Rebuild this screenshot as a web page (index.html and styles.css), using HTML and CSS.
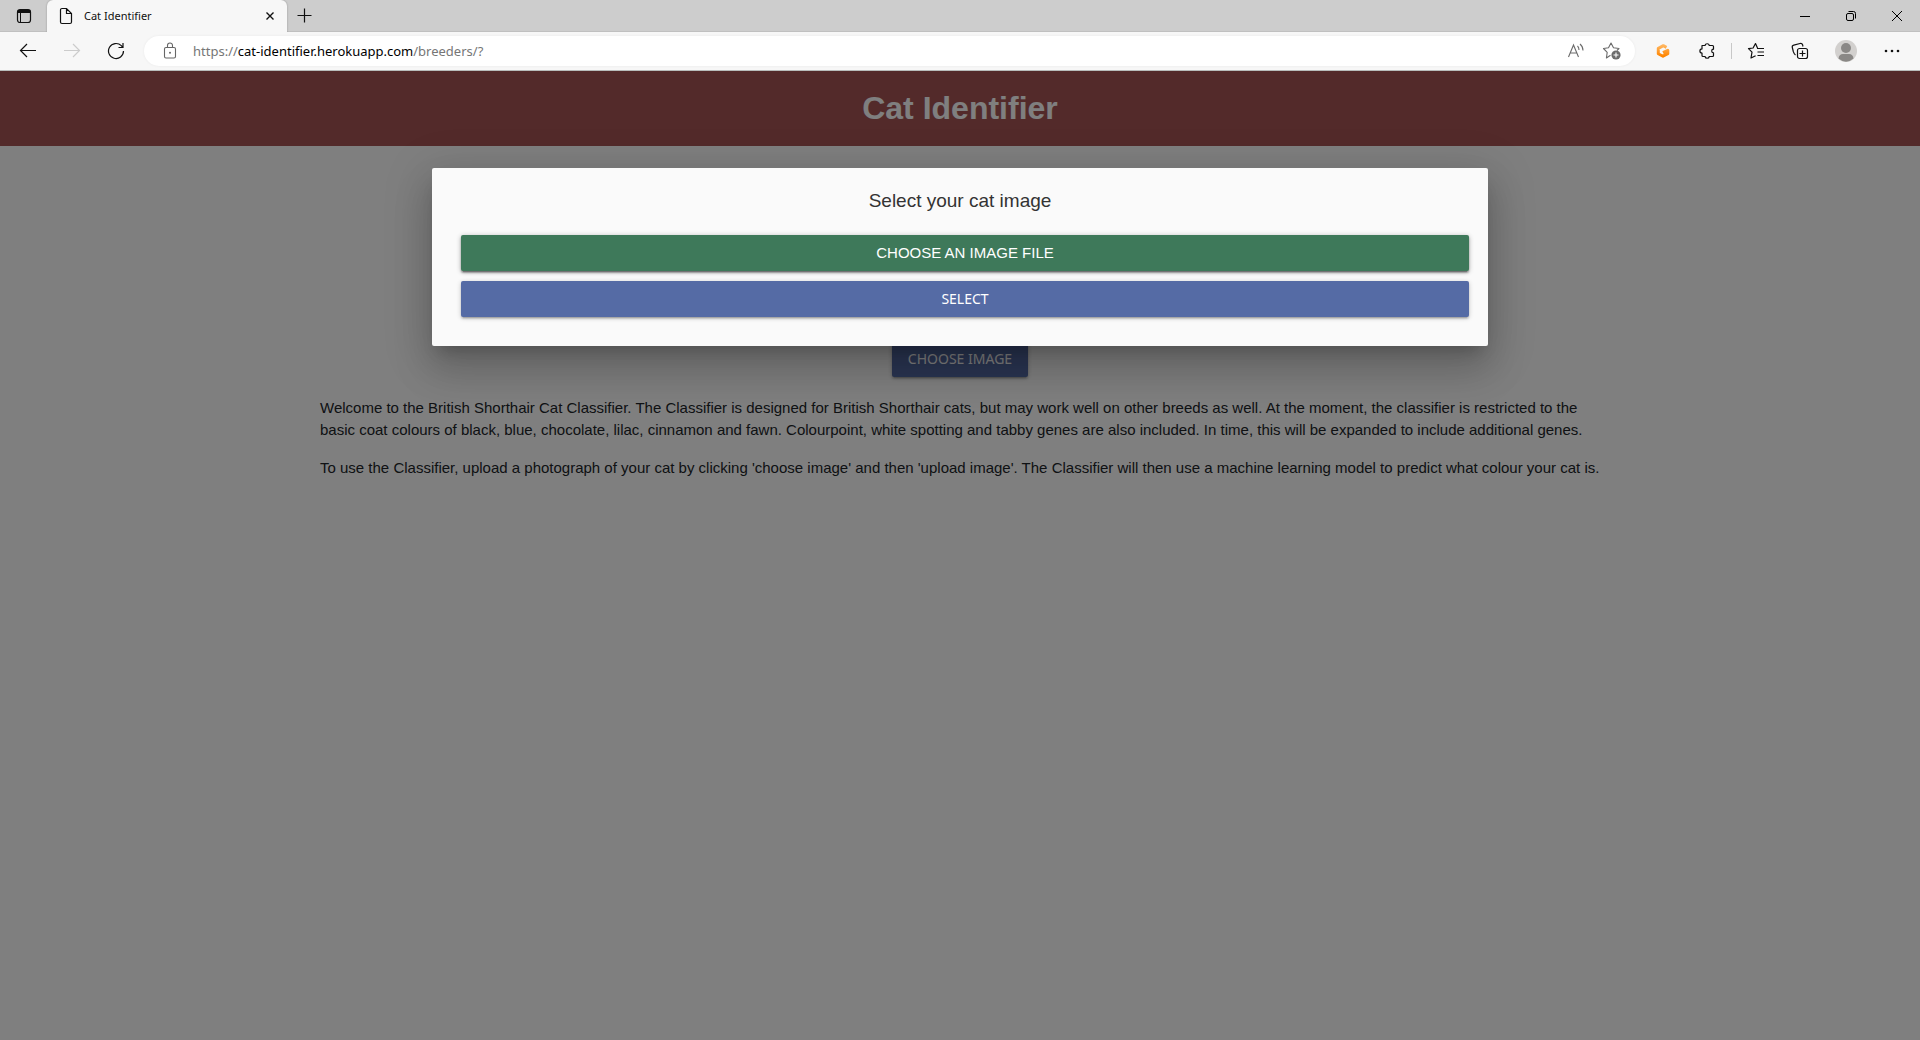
FILE: index.html
```html
<!DOCTYPE html>
<html lang="en">
<head>
<meta charset="utf-8">
<title>Cat Identifier</title>
<link rel="stylesheet" href="styles.css">
</head>
<body>
<div class="browser">
  <div class="tabstrip">
    <button class="tab-actions" aria-label="Tab actions">
      <svg width="16" height="16" viewBox="0 0 16 16" fill="none" stroke="#111"><rect x="1.5" y="1.5" width="13" height="13" rx="2.5" stroke-width="1.2"/><path d="M2 2.5h12v2H2z" fill="#111"/><path d="M4.5 5v9"/></svg>
    </button>
    <div class="tab">
      <svg width="14" height="18" viewBox="1 0 14 18" fill="none" stroke="#111" stroke-width="1.2"><path d="M8.5 1.5H4A1.5 1.5 0 0 0 2.500 3v12A1.500 1.500 0 0 0 4 16.500h8a1.500 1.500 0 0 0 1.500-1.500V6.500zM8.500 1.500v5h5"/></svg>
      <span class="tab-title">Cat Identifier</span>
      <button class="tab-close" aria-label="Close tab"><svg width="10" height="10" viewBox="0 0 10 10" stroke="#111" stroke-width="1.4"><path d="M1.500 1.500l7 7M8.500 1.500l-7 7"/></svg></button>
    </div>
    <button class="new-tab" aria-label="New tab"><svg width="16" height="16" viewBox="0 0 16 16" stroke="#111" stroke-width="1.2"><path d="M7.500 .500v14M.500 7.500h14"/></svg></button>
    <div class="window-controls">
      <button aria-label="Minimise"><svg width="12" height="12" viewBox="0 0 12 12" stroke="#000"><path d="M1 6.500h10"/></svg></button>
      <button aria-label="Restore"><svg width="12" height="12" viewBox="0 0 12 12" fill="none" stroke="#000"><rect x="1.500" y="3.500" width="7" height="7" rx="1.500"/><path d="M3.500 1.500H8.500A2 2 0 0 1 10.500 3.500V8.500"/></svg></button>
      <button aria-label="Close"><svg width="12" height="12" viewBox="0 0 12 12" stroke="#000"><path d="M1 1l10 10M11 1L1 11"/></svg></button>
    </div>
  </div>
  <div class="toolbar">
    <button class="tool" aria-label="Back"><svg width="18" height="18" viewBox="0 0 18 18" fill="none" stroke="#111" stroke-width="1.200"><path d="M17 8.500H1.500M8 2L1.500 8.500 8 15"/></svg></button>
    <button class="tool" aria-label="Forward" disabled><svg width="18" height="18" viewBox="0 0 18 18" fill="none" stroke="#ccc" stroke-width="1.200"><path d="M1 8.500h15.500M10 2l6.500 6.500L10 15"/></svg></button>
    <button class="tool" aria-label="Refresh"><svg width="18" height="18" viewBox="0 0 18 18" fill="none" stroke="#111" stroke-width="1.200"><path d="M16.500 9A7.500 7.500 0 1 1 14.300 3.700L15.500 5M16 1v4.500h-4.500"/></svg></button>
    <div class="address">
      <button class="site-info" aria-label="Site information"><svg width="16" height="18" viewBox="0 0 16 18" fill="none" stroke="#666" stroke-width="1.100"><rect x="2.500" y="5.500" width="11" height="10.500" rx="1.500"/><path d="M5.500 5.500V3.500a2.500 2.500 0 0 1 5 0v2"/><circle cx="8" cy="10.800" r="1" fill="#666" stroke="none"/></svg></button>
      <div class="url" role="textbox" aria-label="Address">https://<span class="host">cat-identifier.herokuapp.com</span>/breeders/?</div>
      <button class="address-tool" aria-label="Read aloud"><svg width="18" height="18" viewBox="0 0 18 18" fill="none" stroke="#6b6b6b" stroke-width="1.100"><path d="M1.500 15L6.500 3l5 12M3.200 11h6.600M10.500 4q1.500 1.500 1.500 4M13 2q3 2.500 3 6.500"/></svg></button>
      <button class="address-tool" aria-label="Add to favourites"><svg width="20" height="20" viewBox="0 0 20 20" fill="none" stroke="#6b6b6b" stroke-width="1.100" stroke-linejoin="round"><path d="M8.500 14.200L4.400 17l.8-5.600L1.500 7.500l5-.8L9 2l2.500 4.700 5.500.8-2 2"/><circle cx="14" cy="14" r="4.600" fill="#6b6b6b" stroke="none"/><path d="M14 11.500v5M11.500 14h5" stroke="#fff"/></svg></button>
    </div>
    <button class="tool" aria-label="Extension"><svg width="16" height="16" viewBox="0 0 16 16" fill="none"><defs><linearGradient id="orange" x2="0" y2="1"><stop stop-color="#ffb45c"/><stop offset="1" stop-color="#ff8500"/></linearGradient></defs><path d="M11.500 4.300L8.300 2.700 3.300 5.300V10.700L8 13.200l4.800-2.500V7.300L8 9.700" stroke="url(#orange)" stroke-width="3" stroke-linejoin="round"/></svg></button>
    <button class="tool" aria-label="Extensions"><svg width="18" height="18" viewBox="0 0 18 18" fill="none" stroke="#111" stroke-width="1.200" stroke-linejoin="round"><path d="M4 3.500h3a2.200 2.200 0 0 1 4.300 0h3.200a1 1 0 0 1 1 1v2.700a1.800 1.800 0 0 0 0 3.600v2.700a1 1 0 0 1-1 1h-3.200a2.200 2.200 0 0 1-4.300 0H5a1 1 0 0 1-1-1v-2.400a2.100 2.100 0 0 1 0-4.200z"/></svg></button>
    <span class="divider"></span>
    <button class="tool" aria-label="Favourites"><svg width="18" height="18" viewBox="0 0 18 18" fill="none" stroke="#111" stroke-width="1.200" stroke-linejoin="round"><path d="M10.500 6L8.500 1.500 6.100 6 1.500 6.700l3.500 3.500L4 16l4.600-2.300M10 6.500h7M10.500 10h6.500M10.500 13.500H17"/></svg></button>
    <button class="tool" aria-label="Collections"><svg width="18" height="18" viewBox="0 0 18 18" fill="none" stroke="#111" stroke-width="1.200"><rect x="6.500" y="6.500" width="10" height="10" rx="2"/><path d="M11.500 8.500v6M8.500 11.500h6M4.500 13C3 12 2.800 11 2.300 9.500L1.300 5.500C1 4.300 1.700 3.500 2.800 3.200L9 1.500c1.300-.3 2.200.2 2.600 1.300l.4 1.700"/></svg></button>
    <button class="tool profile" aria-label="Profile"><svg width="22" height="22" viewBox="0 0 22 22"><circle cx="11" cy="11" r="11" fill="#d2d0ce"/><circle cx="11" cy="8" r="5" fill="#8a8886"/><path d="M3.500 18.500Q4 14 8 14h6q4 0 4.500 4.500Q11 25 3.500 18.500z" fill="#8a8886"/></svg></button>
    <button class="tool menu" aria-label="Settings and more"><svg width="16" height="4" viewBox="0 0 16 4" fill="#111"><circle cx="2" cy="2" r="1.300"/><circle cx="8" cy="2" r="1.300"/><circle cx="14" cy="2" r="1.300"/></svg></button>
  </div>
  <div class="page">
    <header class="banner"><h1>Cat Identifier</h1></header>
    <main class="container">
      <button class="btn">Choose image</button>
      <div class="intro">
        <p>Welcome to the British Shorthair Cat Classifier. The Classifier is designed for British Shorthair cats, but may work well on other breeds as well. At the moment, the classifier is restricted to the basic coat colours of black, blue, chocolate, lilac, cinnamon and fawn. Colourpoint, white spotting and tabby genes are also included. In time, this will be expanded to include additional genes.</p>
        <p>To use the Classifier, upload a photograph of your cat by clicking 'choose image' and then 'upload image'. The Classifier will then use a machine learning model to predict what colour your cat is.</p>
      </div>
    </main>
    <div class="overlay"></div>
    <div class="modal" role="dialog" aria-labelledby="modal-title">
      <h2 id="modal-title">Select your cat image</h2>
      <div class="modal-actions">
        <button class="btn btn-file">Choose an image file</button>
        <button class="btn">Select</button>
      </div>
    </div>
  </div>
</div>
</body>
</html>
```
FILE: styles.css
```css
* { box-sizing: border-box; }

body {
  margin: 0;
  font-family: "Liberation Sans", Arial, sans-serif;
}

button {
  border: 0;
  padding: 0;
  background: none;
  font-family: inherit;
}

.browser {
  display: flex;
  flex-direction: column;
  min-height: 100vh;
}

.tabstrip {
  display: flex;
  height: 32px;
  background: #cdcdcd;
  box-shadow: inset 0 -1px #c0c0c0;
}

.tabstrip button,
.toolbar button {
  display: flex;
  align-items: center;
  justify-content: center;
}

.tab-actions { width: 47px; }

.tab {
  display: flex;
  align-items: center;
  width: 240px;
  padding: 0 8px 0 12px;
  border-radius: 6px 6px 0 0;
  background: #f7f7f7;
  box-shadow: 0 0 2px rgba(0, 0, 0, .3);
  clip-path: inset(0 -2px);
}

.tab-title {
  flex: 1;
  padding-left: 11px;
  font: 11px/16px "Noto Sans", sans-serif;
  color: #111;
}

.tab-close { width: 18px; height: 18px; }
.new-tab { width: 36px; }

.window-controls {
  display: flex;
  margin-left: auto;
}

.window-controls button { width: 46px; }

.toolbar {
  display: flex;
  align-items: center;
  height: 39px;
  padding: 0 6px;
  border-bottom: 1px solid #b9bdbb;
  background: #f7f7f7;
}

.tool { width: 44px; height: 32px; }

.address {
  display: flex;
  flex: 1;
  align-items: center;
  height: 30px;
  margin: 0 6px;
  padding: 0 5px 0 12px;
  border-radius: 15px;
  background: #fff;
  box-shadow: 0 0 3px rgba(0, 0, 0, .06);
}

.site-info { width: 28px; height: 28px; }

.url {
  flex: 1;
  padding-left: 9px;
  font: 13px/20px "Noto Sans", sans-serif;
  color: #767676;
}

.host { color: #000; }
.address-tool { width: 36px; height: 28px; }

.divider {
  width: 1px;
  height: 16px;
  margin: 0 2px;
  background: #c8c8c8;
}

.profile,
.menu { margin-left: 2px; }

.page {
  position: relative;
  flex: 1;
  background: #fff;
}

.banner {
  height: 75px;
  background: #a65555;
  color: #fff;
  text-align: center;
}

.banner h1 {
  margin: 0;
  font-size: 32px;
  line-height: 75px;
}

.container {
  display: flex;
  flex-direction: column;
  align-items: center;
  gap: 20px;
  max-width: 1280px;
  margin: 0 auto;
  padding-top: 195px;
}

.intro {
  display: flex;
  flex-direction: column;
  gap: 16px;
}

.intro p {
  margin: 0;
  font-size: 15px;
  line-height: 22px;
  color: #212529;
}

.btn {
  height: 36px;
  padding: 0 16px;
  border-radius: 2px;
  background: #556ba5;
  box-shadow: 0 2px 2px 0 rgba(0, 0, 0, .14), 0 3px 1px -2px rgba(0, 0, 0, .12), 0 1px 5px 0 rgba(0, 0, 0, .2);
  color: #fff;
  font: 14px/36px "Noto Sans", sans-serif;
  text-transform: uppercase;
}

.overlay {
  position: absolute;
  inset: 0;
  background: rgba(0, 0, 0, .5);
}

.modal {
  position: absolute;
  top: 10%;
  left: 0;
  right: 0;
  width: 55%;
  margin: 0 auto;
  padding: 23px 19px 29px 29px;
  border-radius: 2px;
  background: #fafafa;
  box-shadow: 0 24px 38px 3px rgba(0, 0, 0, .14), 0 9px 46px 8px rgba(0, 0, 0, .12), 0 11px 15px -7px rgba(0, 0, 0, .2);
}

.modal h2 {
  margin: 0 10px 24px 0;
  font-size: 19px;
  font-weight: 400;
  line-height: 20px;
  text-align: center;
  color: #333;
}

.modal-actions {
  display: flex;
  flex-direction: column;
  gap: 10px;
}

.btn-file {
  background: #3e795a;
  box-shadow: 0 2px 2px 0 rgba(0, 0, 0, .28), 0 3px 1px -2px rgba(0, 0, 0, .24), 0 1px 5px 0 rgba(0, 0, 0, .3);
  font-family: "Liberation Sans", Arial, sans-serif;
  font-size: 15px;
}
```
